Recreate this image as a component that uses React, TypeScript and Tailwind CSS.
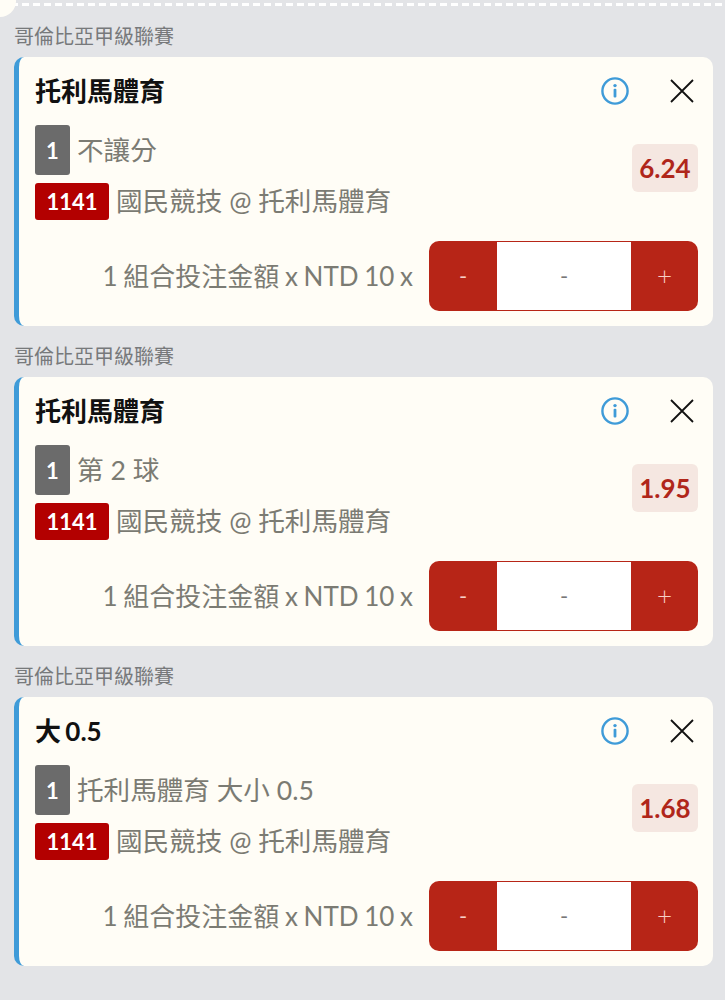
const font = "font-['Lato','Noto_Sans_CJK_TC',sans-serif]";

const bets = [
  { title: "托利馬體育", sub: "不讓分", odds: "6.24" },
  { title: "托利馬體育", sub: "第 2 球", odds: "1.95" },
  { title: "大 0.5", sub: "托利馬體育 大小 0.5", odds: "1.68" },
];

function Info() {
  return (
    <svg width="30" height="30" viewBox="0 0 30 30" fill="none">
      <circle cx="15" cy="15" r="12.6" stroke="#3f9bd8" strokeWidth="2.4" />
      <circle cx="15" cy="9.6" r="1.7" fill="#3f9bd8" />
      <rect x="13.6" y="12.8" width="2.8" height="8.6" rx="1" fill="#3f9bd8" />
    </svg>
  );
}

function Close() {
  return (
    <svg width="24" height="24" viewBox="0 0 24 24" fill="none">
      <path d="M1 1L23 23M23 1L1 23" stroke="#111" strokeWidth="1.8" />
    </svg>
  );
}

function Card({ title, sub, odds }: { title: string; sub: string; odds: string }) {
  return (
    <div className="flex h-[269px] flex-col rounded-[10px] border-l-[5px] border-[#3f9bd8] bg-[#fffdf6] pl-[16px] pr-[15px]">
      <div className="flex h-[68px] items-center">
        <div className="flex-1 text-[26px] font-bold leading-[32px] text-[#111] [word-spacing:-2px]">{title}</div>
        <div className="mr-[40px] flex"><Info /></div>
        <div className="mr-[4px] flex"><Close /></div>
      </div>
      <div className="flex items-start justify-between">
        <div className="flex flex-col gap-[8px]">
          <div className="flex items-center gap-[8px]">
            <div className="flex h-[50px] w-[35px] items-center justify-center rounded-[3px] bg-[#6b6b6b] text-[22px] font-bold text-white">1</div>
            <div className="ml-[-1px] text-[26.6px] leading-[50px] text-[#7b7b73]">{sub}</div>
          </div>
          <div className="flex items-center gap-[8px]">
            <div className="flex h-[37px] w-[74px] items-center justify-center rounded-[3px] bg-[#b30000] text-[22px] font-bold text-white">1141</div>
            <div className="ml-[-1px] text-[26.6px] leading-[37px] text-[#7b7b73]">國民競技 @ 托利馬體育</div>
          </div>
        </div>
        <div className="mt-[19px] flex h-[48px] w-[66px] items-center justify-center rounded-[6px] bg-[#f5e7e1] text-[26px] font-bold text-[#b0261a]">{odds}</div>
      </div>
      <div className="mt-[21px] flex items-center justify-end gap-[16px]">
        <div className="text-[26px] leading-[30px] text-[#7b7b73] [word-spacing:-1px]">1 組合投注金額 x NTD 10 x</div>
        <div className="flex h-[70px] w-[269px] overflow-hidden rounded-[10px] bg-[#b72517] text-[22px]">
          <div className="flex w-[68px] items-center justify-center pb-[1px] text-[#f7cfc6]">-</div>
          <div className="my-[1px] flex flex-1 items-center justify-center bg-white pb-[1px] text-[#777]">-</div>
          <div className="flex w-[67px] items-center justify-center pb-[2px] text-[26px] font-light text-[#f7cfc6]">+</div>
        </div>
      </div>
    </div>
  );
}

export default function App() {
  return (
    <div className={`relative h-[1000px] w-[725px] overflow-hidden bg-[#e3e4e7] pl-[14px] pr-[12px] pt-[6px] ${font}`}>
      <div className="absolute left-0 right-0 top-[3px] h-[3px] bg-[repeating-linear-gradient(90deg,#ffffff_0,#ffffff_7px,transparent_7px,transparent_11px)]" />
      <div className="absolute left-[-16px] top-[-15px] h-[32px] w-[32px] rounded-full bg-[#fffdf6]" />
      {bets.map((b, i) => (
        <div key={i}>
          <div className="flex h-[51px] items-end pb-[10px] text-[20px] leading-[22px] text-[#77797b]">哥倫比亞甲級聯賽</div>
          <Card {...b} />
        </div>
      ))}
    </div>
  );
}
